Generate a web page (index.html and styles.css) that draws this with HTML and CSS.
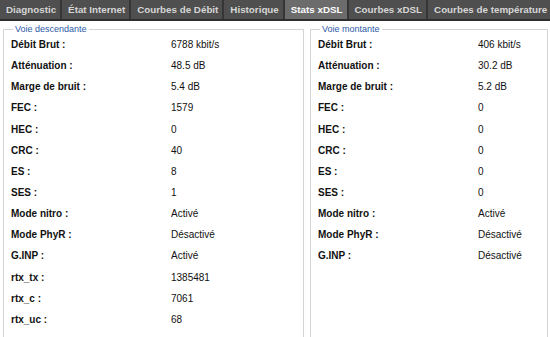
FILE: index.html
```html
<!DOCTYPE html>
<html lang="fr">
<head>
  <meta charset="UTF-8" />
  <title>Stats xDSL</title>
  <link rel="stylesheet" href="styles.css">
</head>
<body>

<ul class="tabs">
  <li><a href="#">Diagnostic</a></li>
  <li><a href="#">État Internet</a></li>
  <li><a href="#">Courbes de Débit</a></li>
  <li><a href="#">Historique</a></li>
  <li class="active"><a href="#">Stats xDSL</a></li>
  <li><a href="#">Courbes xDSL</a></li>
  <li><a href="#">Courbes de température</a></li>
</ul>

<div class="panels">
  <fieldset class="panel left">
    <legend>Voie descendante</legend>
    <div class="row"><span class="label">Débit Brut :</span><span>6788 kbit/s</span></div>
    <div class="row"><span class="label">Atténuation :</span><span>48.5 dB</span></div>
    <div class="row"><span class="label">Marge de bruit :</span><span>5.4 dB</span></div>
    <div class="row"><span class="label">FEC :</span><span>1579</span></div>
    <div class="row"><span class="label">HEC :</span><span>0</span></div>
    <div class="row"><span class="label">CRC :</span><span>40</span></div>
    <div class="row"><span class="label">ES :</span><span>8</span></div>
    <div class="row"><span class="label">SES :</span><span>1</span></div>
    <div class="row"><span class="label">Mode nitro :</span><span>Activé</span></div>
    <div class="row"><span class="label">Mode PhyR :</span><span>Désactivé</span></div>
    <div class="row"><span class="label">G.INP :</span><span>Activé</span></div>
    <div class="row"><span class="label">rtx_tx :</span><span>1385481</span></div>
    <div class="row"><span class="label">rtx_c :</span><span>7061</span></div>
    <div class="row"><span class="label">rtx_uc :</span><span>68</span></div>
  </fieldset>

  <fieldset class="panel right">
    <legend>Voie montante</legend>
    <div class="row"><span class="label">Débit Brut :</span><span>406 kbit/s</span></div>
    <div class="row"><span class="label">Atténuation :</span><span>30.2 dB</span></div>
    <div class="row"><span class="label">Marge de bruit :</span><span>5.2 dB</span></div>
    <div class="row"><span class="label">FEC :</span><span>0</span></div>
    <div class="row"><span class="label">HEC :</span><span>0</span></div>
    <div class="row"><span class="label">CRC :</span><span>0</span></div>
    <div class="row"><span class="label">ES :</span><span>0</span></div>
    <div class="row"><span class="label">SES :</span><span>0</span></div>
    <div class="row"><span class="label">Mode nitro :</span><span>Activé</span></div>
    <div class="row"><span class="label">Mode PhyR :</span><span>Désactivé</span></div>
    <div class="row"><span class="label">G.INP :</span><span>Désactivé</span></div>
  </fieldset>
</div>

</body>
</html>
```

FILE: styles.css
```css
body {
  margin: 0;
  background: #fff;
  font-family: "Liberation Sans", Arial, sans-serif;
  font-size: 10px;
  color: #111;
  overflow: hidden;
}

/* top tab bar */
.tabs {
  list-style: none;
  margin: 0;
  padding: 0;
  display: flex;
  height: 19px;
  background: #4f4f4f;
  border-bottom: 2px solid #2e2e2e;
}

.tabs li {
  display: flex;
  align-items: center;
  padding: 0 4px 0 6px;
  border-right: 2px solid #363636;
  white-space: nowrap;
}

.tabs li:last-child {
  flex: 1;
  border-right: none;
}

.tabs li a {
  color: #d6d6d6;
  text-decoration: none;
  font-weight: bold;
  font-size: 9.8px;
}

.tabs li.active {
  background: #6c6c6c;
}

.tabs li.active a {
  color: #fff;
}

/* two stat boxes */
.panels {
  display: flex;
  gap: 6px;
  padding: 3px 2px 0 3px;
}

.panel {
  margin: 0;
  padding: 0 0 20px 7px;
  border: 1px solid #d4d4d4;
  min-width: 0;
}

.panel.left {
  width: 292px;
}

.panel.right {
  flex: 1;
}

.panel legend {
  color: #2d5aa8;
  font-size: 9px;
  padding: 0 2px;
  margin-left: 2px;
}

.row {
  display: flex;
  height: 21.15px;
  align-items: center;
}

.row .label {
  width: 160px;
  font-weight: bold;
}
```
